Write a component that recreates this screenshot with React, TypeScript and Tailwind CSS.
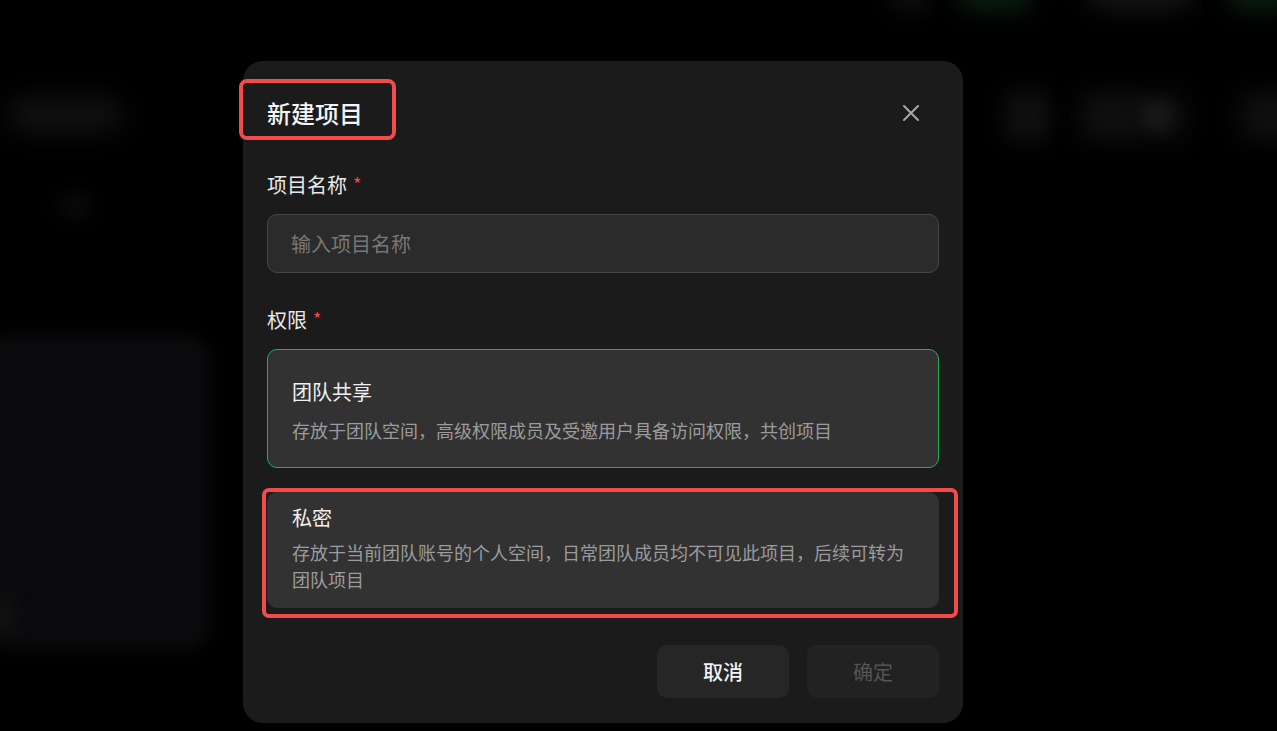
import React from "react";

const font = { fontFamily: '"Noto Sans CJK SC", "Noto Sans", sans-serif' };

function CloseIcon() {
  return (
    <svg width="18" height="18" viewBox="0 0 18 18" fill="none">
      <path d="M2 2L16 16M16 2L2 16" stroke="#a9a9a9" strokeWidth="2" strokeLinecap="round" />
    </svg>
  );
}

function Backdrop() {
  return (
    <div className="absolute inset-0 overflow-hidden bg-black">
      {/* blurred page content behind the overlay */}
      <div className="absolute left-[10px] top-[100px] w-[110px] h-[30px] rounded-md bg-[#141414] blur-[14px]" />
      <div className="absolute left-[60px] top-[195px] w-[30px] h-[22px] rounded-md bg-[#0c0c0c] blur-[10px]" />
      <div className="absolute left-[-20px] top-[335px] w-[230px] h-[315px] rounded-[24px] bg-[#0b0b0d] blur-[8px]" />
      <div className="absolute left-[-10px] top-[600px] w-[20px] h-[30px] rounded-md bg-[#161616] blur-[10px]" />
      <div className="absolute left-[890px] top-[-14px] w-[40px] h-[22px] rounded-md bg-[#121212] blur-[12px]" />
      <div className="absolute left-[960px] top-[-16px] w-[70px] h-[24px] rounded-md bg-[#0d2414] blur-[12px]" />
      <div className="absolute left-[1090px] top-[-16px] w-[100px] h-[24px] rounded-md bg-[#181818] blur-[12px]" />
      <div className="absolute left-[1230px] top-[-16px] w-[60px] h-[24px] rounded-md bg-[#0d2414] blur-[12px]" />
      <div className="absolute left-[1005px] top-[92px] w-[45px] h-[48px] rounded-lg bg-[#111111] blur-[12px]" />
      <div className="absolute left-[1080px] top-[92px] w-[105px] h-[48px] rounded-lg bg-[#0f0f0f] blur-[12px]" />
      <div className="absolute left-[1145px] top-[103px] w-[25px] h-[25px] rounded-md bg-[#1a1a1a] blur-[8px]" />
      <div className="absolute left-[1240px] top-[92px] w-[60px] h-[48px] rounded-lg bg-[#0f0f0f] blur-[12px]" />
    </div>
  );
}

export default function App() {
  return (
    <div className="relative w-[1277px] h-[731px] overflow-hidden bg-black" style={font}>
      <Backdrop />
      <div className="relative flex pl-[243px] pt-[61px]">
        <div className="relative w-[720px] h-[662px] rounded-[20px] bg-[#1b1b1b] px-[24px] pt-[36px] pb-[25px] flex flex-col">
          {/* header */}
          <div className="flex items-center justify-between h-[32px]">
            <div className="text-[24px] leading-[32px] font-medium text-[#f5f5f5]">新建项目</div>
            <button className="mr-[16px] flex items-center justify-center w-[24px] h-[24px]">
              <CloseIcon />
            </button>
          </div>

          {/* name */}
          <div className="mt-[43px] text-[20px] leading-[26px] text-[#e8e8e8] flex items-start">
            项目名称<span className="ml-[6px] mt-[1px] text-[18px] leading-[20px] text-[#f04a4a]">*</span>
          </div>
          <div className="mt-[16px] h-[59px] rounded-[10px] border border-[#464646] bg-[#2b2b2b] flex items-center px-[23px]">
            <span className="text-[20px] text-[#777777]">输入项目名称</span>
          </div>

          {/* permission */}
          <div className="mt-[34px] text-[20px] leading-[26px] text-[#e8e8e8] flex items-start">
            权限<span className="ml-[6px] mt-[1px] text-[18px] leading-[20px] text-[#f04a4a]">*</span>
          </div>

          <div className="mt-[16px] h-[119px] rounded-[10px] border border-[#1db34c] bg-[#323232] px-[24px] pt-[29px]">
            <div className="text-[20px] leading-[26px] text-[#f0f0f0]">团队共享</div>
            <div className="mt-[12px] text-[18px] leading-[27px] text-[#9c9c9c]">
              存放于团队空间，高级权限成员及受邀用户具备访问权限，共创项目
            </div>
          </div>

          <div className="mt-[24px] h-[116px] rounded-[10px] border border-transparent bg-[#323232] px-[24px] pt-[12px]">
            <div className="text-[20px] leading-[26px] text-[#f0f0f0]">私密</div>
            <div className="mt-[8px] text-[18px] leading-[27px] text-[#9c9c9c]">
              存放于当前团队账号的个人空间，日常团队成员均不可见此项目，后续可转为团队项目
            </div>
          </div>

          {/* footer */}
          <div className="mt-auto flex justify-end gap-[18px]">
            <button className="w-[132px] h-[53px] rounded-[10px] bg-[#262626] text-[20px] font-medium text-[#f2f2f2]">
              取消
            </button>
            <button className="w-[132px] h-[53px] rounded-[10px] bg-[#222222] text-[20px] text-[#555555]">
              确定
            </button>
          </div>

          {/* annotation overlays */}
          <div className="pointer-events-none absolute left-[-4px] top-[18px] w-[157px] h-[61px] rounded-[8px] border-[4px] border-[#f24b4b]" />
          <div className="pointer-events-none absolute left-[19px] top-[427px] w-[696px] h-[130px] rounded-[7px] border-[4px] border-[#f24b4b]" />
        </div>
      </div>
    </div>
  );
}
